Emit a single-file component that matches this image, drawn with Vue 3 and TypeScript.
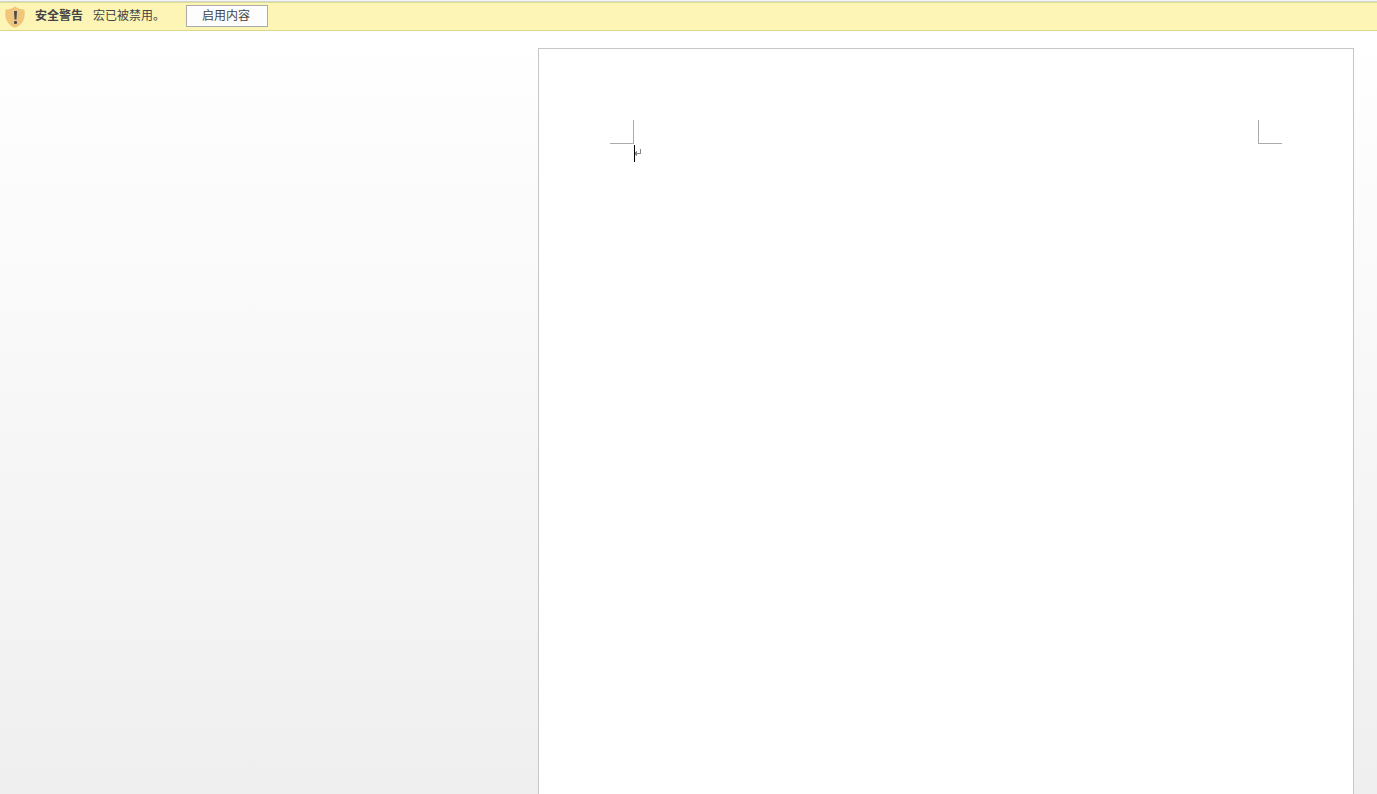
<script setup lang="ts">
import { ref } from 'vue'

const macrosEnabled = ref<boolean>(false)

function enableContent(): void {
  macrosEnabled.value = true
}
</script>

<template>
  <div class="app">
    <div v-if="!macrosEnabled" class="message-bar" role="alert">
      <svg class="shield" viewBox="0 -2 20 24" aria-hidden="true">
        <path
          d="M10 0.2C7.6 2.3 4.4 3.5 0.6 3.6C0 8.2 0.1 12.4 2.3 15.8C4 18.5 6.7 20.5 10 21.8C13.3 20.5 16 18.5 17.7 15.8C19.9 12.4 20 8.2 19.4 3.6C15.6 3.5 12.4 2.3 10 0.2Z"
          fill="#efc67c"
        />
        <path d="M9 5H12L11.5 13.5H9.5Z" fill="#4b4a4b" />
        <rect x="9" y="15" width="3" height="3" rx="1" fill="#4b4a4b" />
      </svg>
      <strong class="title">安全警告</strong>
      <span class="text">宏已被禁用。</span>
      <button class="enable" type="button" @click="enableContent">启用内容</button>
    </div>
    <main class="workspace">
      <article class="page">
        <div class="margins">
          <span class="corner corner-left"></span>
          <span class="corner corner-right"></span>
        </div>
        <p class="paragraph">
          <span class="caret"></span>
          <svg class="mark" viewBox="0 0 6 17" shape-rendering="crispEdges" aria-hidden="true">
            <path d="M5 4H6V9H2V11H1V10H0V7H1V6H2V8H5Z" fill="#868686" />
          </svg>
        </p>
      </article>
    </main>
  </div>
</template>

<style>
body {
  margin: 0;
}
</style>

<style scoped>
.app {
  display: flex;
  flex-direction: column;
  height: 100vh;
  overflow: hidden;
  box-sizing: border-box;
  border-top: 1px solid #f4f4f4;
  background: #ffffff;
  font-family: "Liberation Sans", "Noto Sans CJK SC", sans-serif;
  font-size: 12px;
  line-height: 16px;
  color: #444444;
}

.message-bar {
  display: flex;
  align-items: center;
  flex: none;
  height: 28px;
  padding-left: 5px;
  border-top: 1px solid #d2d4d0;
  border-bottom: 1px solid #dcd88a;
  background: #fcf5b6;
  box-shadow: inset 0 1px #dce094;
}

.shield {
  width: 20px;
  height: 24px;
  margin-right: 10px;
}

.title {
  margin-right: 10px;
}

.text {
  margin-right: 21px;
}

.enable {
  width: 82px;
  height: 22px;
  padding: 0 2px 0 0;
  border: 1px solid #ababab;
  background: #fdfdfd;
  font: inherit;
  color: inherit;
}

.workspace {
  display: flex;
  flex: 1;
  justify-content: flex-end;
  min-height: 0;
  padding: 17px 23px 0;
  background: linear-gradient(#ffffff, #efefef);
}

.page {
  box-sizing: border-box;
  width: 100%;
  max-width: 816px;
  padding: 71px;
  border: 1px solid #c6c6c6;
  border-bottom: 0;
  background: #ffffff;
}

.margins {
  display: flex;
  justify-content: space-between;
}

.corner {
  box-sizing: border-box;
  width: 24px;
  height: 24px;
  border-bottom: 1px solid #ababab;
}

.corner-left {
  border-right: 1px solid #ababab;
}

.corner-right {
  border-left: 1px solid #ababab;
}

.paragraph {
  display: flex;
  margin: 1px 24px 0;
}

.caret {
  width: 1px;
  height: 17px;
  background: #000000;
}

.mark {
  width: 6px;
  height: 17px;
}
</style>
